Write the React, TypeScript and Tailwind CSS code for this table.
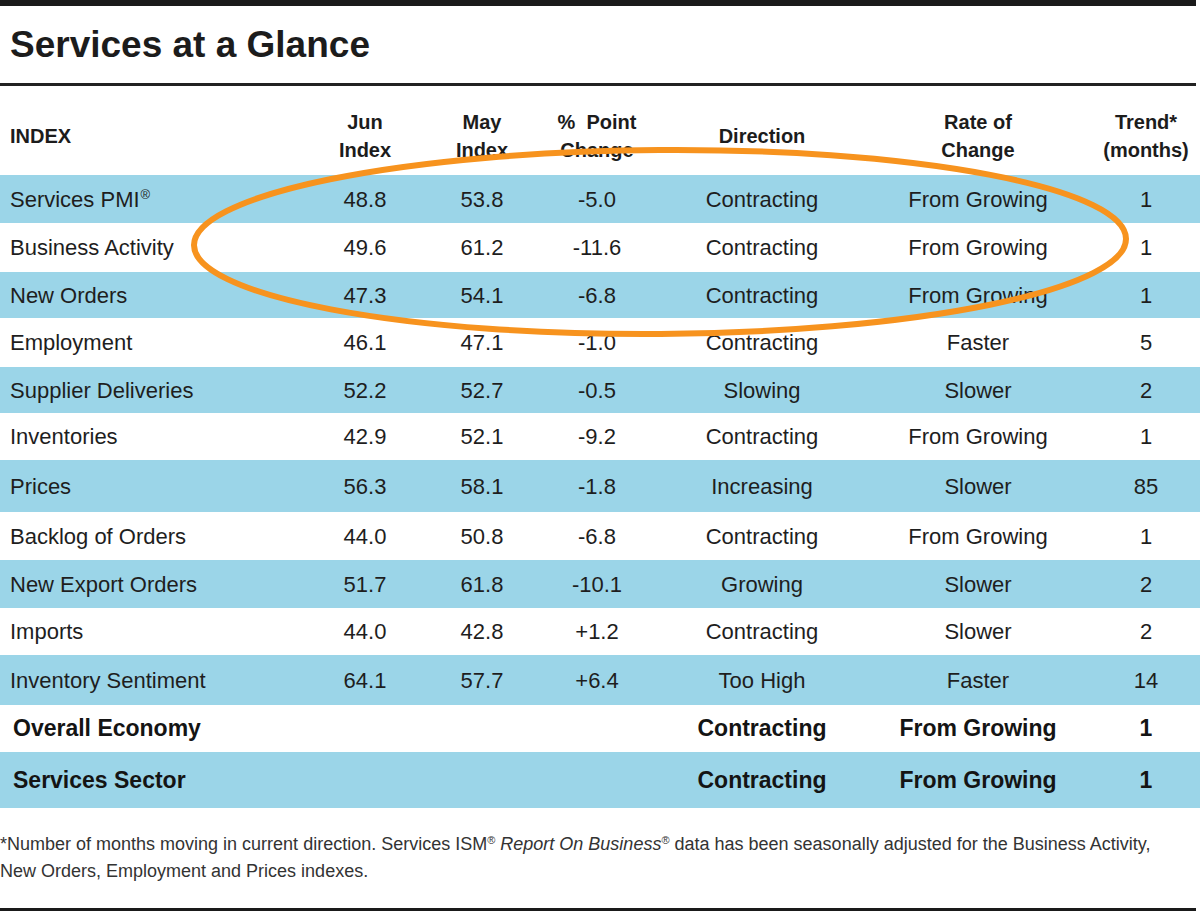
import React from "react";

type Row = {
  label: string;
  sup?: boolean;
  jun: string;
  may: string;
  change: string;
  direction: string;
  rate: string;
  trend: string;
  h: string;
};

const rows: Row[] = [
  { label: "Services PMI", sup: true, jun: "48.8", may: "53.8", change: "-5.0", direction: "Contracting", rate: "From Growing", trend: "1", h: "h-[48px]" },
  { label: "Business Activity", jun: "49.6", may: "61.2", change: "-11.6", direction: "Contracting", rate: "From Growing", trend: "1", h: "h-[49px]" },
  { label: "New Orders", jun: "47.3", may: "54.1", change: "-6.8", direction: "Contracting", rate: "From Growing", trend: "1", h: "h-[46px]" },
  { label: "Employment", jun: "46.1", may: "47.1", change: "-1.0", direction: "Contracting", rate: "Faster", trend: "5", h: "h-[49px]" },
  { label: "Supplier Deliveries", jun: "52.2", may: "52.7", change: "-0.5", direction: "Slowing", rate: "Slower", trend: "2", h: "h-[46px]" },
  { label: "Inventories", jun: "42.9", may: "52.1", change: "-9.2", direction: "Contracting", rate: "From Growing", trend: "1", h: "h-[47px]" },
  { label: "Prices", jun: "56.3", may: "58.1", change: "-1.8", direction: "Increasing", rate: "Slower", trend: "85", h: "h-[52px]" },
  { label: "Backlog of Orders", jun: "44.0", may: "50.8", change: "-6.8", direction: "Contracting", rate: "From Growing", trend: "1", h: "h-[48px]" },
  { label: "New Export Orders", jun: "51.7", may: "61.8", change: "-10.1", direction: "Growing", rate: "Slower", trend: "2", h: "h-[48px]" },
  { label: "Imports", jun: "44.0", may: "42.8", change: "+1.2", direction: "Contracting", rate: "Slower", trend: "2", h: "h-[47px]" },
  { label: "Inventory Sentiment", jun: "64.1", may: "57.7", change: "+6.4", direction: "Too High", rate: "Faster", trend: "14", h: "h-[50px]" },
];

const summary = [
  { label: "Overall Economy", direction: "Contracting", rate: "From Growing", trend: "1", h: "h-[47px]", bg: "bg-white" },
  { label: "Services Sector", direction: "Contracting", rate: "From Growing", trend: "1", h: "h-[56px]", bg: "bg-[#9bd5e8]" },
];

const cols = "grid grid-cols-[310px_110px_124px_106px_224px_208px_118px] items-center";

const App = () => {
  return (
    <div className="relative w-[1200px] h-[911px] bg-white text-[#1e1e1e] font-['Liberation_Sans',Arial,sans-serif] overflow-hidden">
      <div className="h-[6px] w-[1196px] bg-[#1a1a1a]" />
      <div className="h-[77px] flex items-center pl-[10px] text-[37px] font-bold text-[#1c1c1c]">
        Services at a Glance
      </div>
      <div className="h-[3px] w-[1196px] bg-[#222]" />

      {/* header */}
      <div className={`${cols} h-[89px] pt-[11px] text-[20px] font-bold leading-[28px] text-[#1c1c1c]`}>
        <div className="pl-[10px]">INDEX</div>
        <div className="text-center">
          Jun
          <br />
          Index
        </div>
        <div className="text-center">
          May
          <br />
          Index
        </div>
        <div className="text-center">
          %&nbsp;&nbsp;Point
          <br />
          Change
        </div>
        <div className="text-center">Direction</div>
        <div className="text-center">
          Rate of
          <br />
          Change
        </div>
        <div className="text-center pl-[10px]">
          Trend*
          <br />
          (months)
        </div>
      </div>

      {/* body */}
      <div className="text-[22px]">
        {rows.map((r, i) => (
          <div
            key={r.label}
            className={`${cols} ${r.h} ${i % 2 === 0 ? "bg-[#9bd5e8]" : "bg-white"}`}
          >
            <div className="pl-[10px] whitespace-nowrap">
              {r.label}
              {r.sup && <span className="text-[13px] relative -top-[8px] ml-[1px]">®</span>}
            </div>
            <div className="text-center">{r.jun}</div>
            <div className="text-center">{r.may}</div>
            <div className="text-center">{r.change}</div>
            <div className="text-center">{r.direction}</div>
            <div className="text-center">{r.rate}</div>
            <div className="text-center pl-[10px]">{r.trend}</div>
          </div>
        ))}
        {summary.map((s) => (
          <div key={s.label} className={`${cols} ${s.h} ${s.bg} text-[23px] font-bold text-[#141414]`}>
            <div className="pl-[13px] whitespace-nowrap">{s.label}</div>
            <div />
            <div />
            <div />
            <div className="text-center">{s.direction}</div>
            <div className="text-center">{s.rate}</div>
            <div className="text-center pl-[10px]">{s.trend}</div>
          </div>
        ))}
      </div>

      {/* footnote */}
      <div className="h-[100px] pt-[24px] text-[18px] leading-[25px] text-[#333]">
        <p className="whitespace-nowrap">
          *Number of months moving in current direction. Services ISM
          <span className="text-[11px] relative -top-[6px]">®</span> <i>Report On Business</i>
          <span className="text-[11px] relative -top-[6px]">®</span> data has been seasonally adjusted for the
          Business Activity,
        </p>
        <p>New Orders, Employment and Prices indexes.</p>
      </div>
      <div className="h-[3px] w-[1196px] bg-[#1a1a1a]" />

      {/* orange highlight */}
      <svg
        className="absolute left-0 top-0 pointer-events-none"
        width="1200"
        height="911"
        viewBox="0 0 1200 911"
      >
        <ellipse
          cx="660"
          cy="242"
          rx="466"
          ry="92"
          fill="none"
          stroke="#f7931e"
          strokeWidth="6"
          transform="rotate(-0.4 660 242)"
        />
      </svg>
    </div>
  );
};

export default App;
